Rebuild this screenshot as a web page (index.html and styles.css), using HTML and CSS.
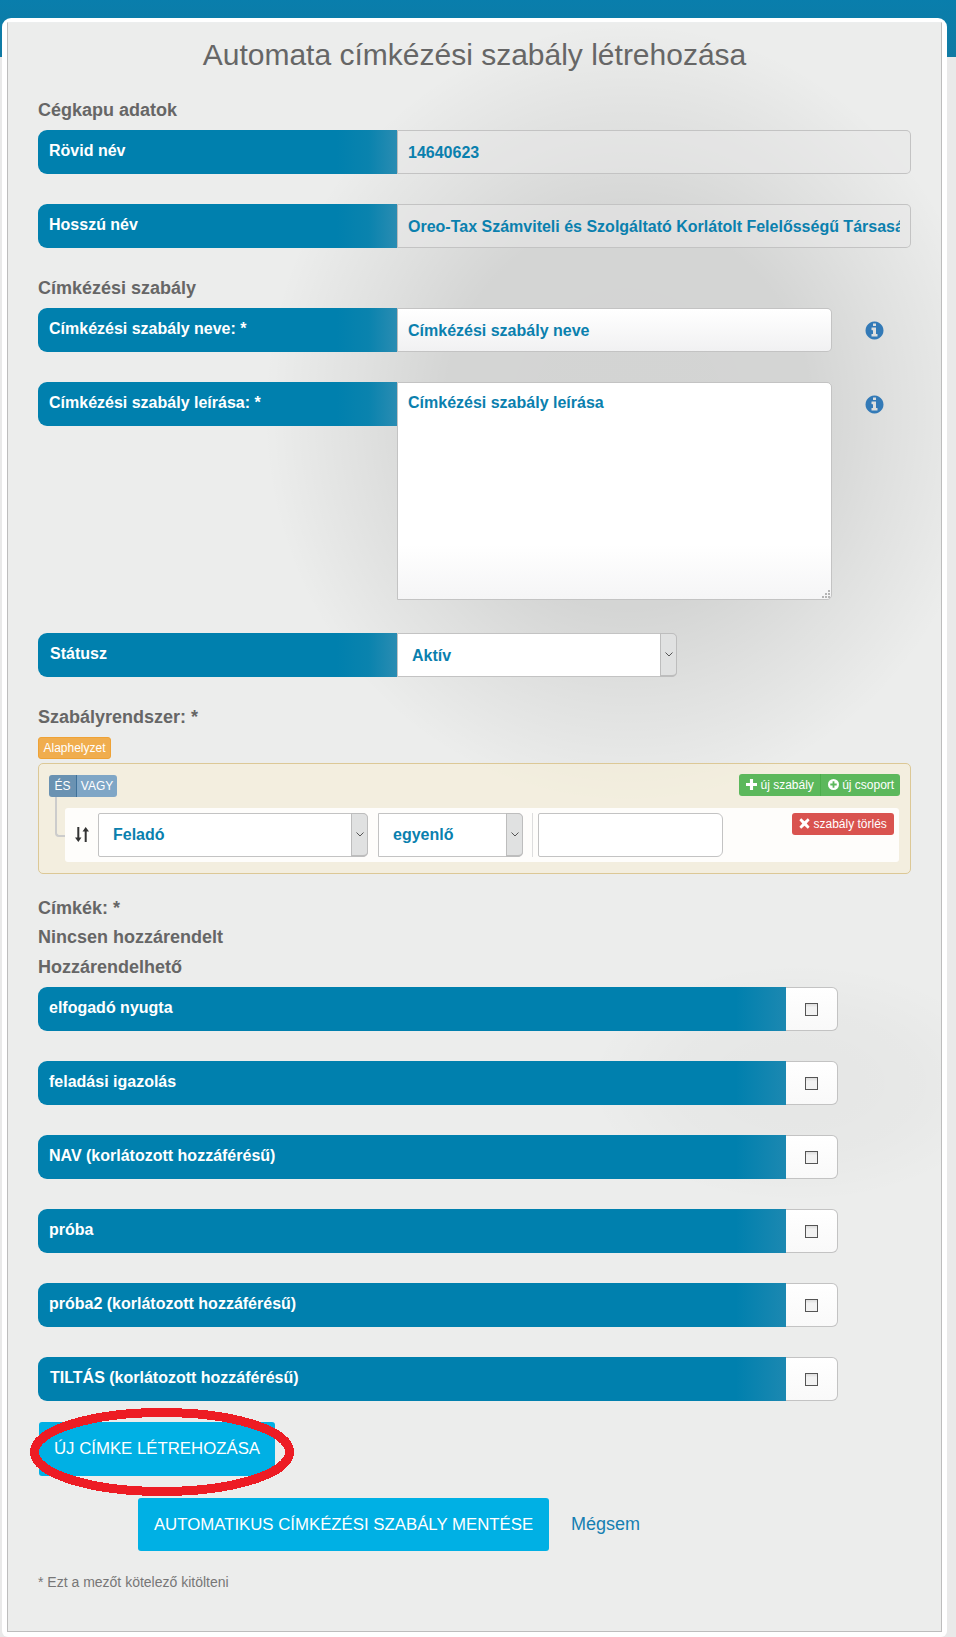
FILE: index.html
```html
<!DOCTYPE html>
<html lang="hu">
<head>
<meta charset="utf-8">
<title>Automata címkézési szabály létrehozása</title>
<link rel="stylesheet" href="styles.css">
</head>
<body>
<div class="topbar"></div>
<main class="card">
  <div class="inner">
    <h1 class="title">Automata címkézési szabály létrehozása</h1>

    <h2 class="section">Cégkapu adatok</h2>
    <div class="row">
      <label class="row-label">Rövid név</label>
      <input class="field field-disabled" readonly value="14640623">
    </div>
    <div class="row">
      <label class="row-label">Hosszú név</label>
      <input class="field field-disabled" readonly value="Oreo-Tax Számviteli és Szolgáltató Korlátolt Felelősségű Társaság">
    </div>

    <h2 class="section">Címkézési szabály</h2>
    <div class="row">
      <label class="row-label">Címkézési szabály neve: *</label>
      <input class="field field-edit" value="Címkézési szabály neve">
      <svg class="info" viewBox="0 0 1792 1792"><path d="M1152 1376v-160q0-14-9-23t-23-9h-96v-512q0-14-9-23t-23-9h-320q-14 0-23 9t-9 23v160q0 14 9 23t23 9h96v320h-96q-14 0-23 9t-9 23v160q0 14 9 23t23 9h448q14 0 23-9t9-23zm-128-896v-160q0-14-9-23t-23-9h-192q-14 0-23 9t-9 23v160q0 14 9 23t23 9h192q14 0 23-9t9-23zm640 416q0 209-103 385.5t-279.5 279.5-385.5 103-385.5-103-279.5-279.5-103-385.5 103-385.5 279.5-279.5 385.5-103 385.5 103 279.5 279.5 103 385.5z"/></svg>
    </div>
    <div class="row row-area">
      <label class="row-label">Címkézési szabály leírása: *</label>
      <div class="area-wrap">
        <textarea class="area">Címkézési szabály leírása</textarea>
        <svg class="grip" viewBox="0 0 8 8"><path d="M6 0h2v2H6zM3 3h2v2H3zM6 3h2v2H6zM0 6h2v2H0zM3 6h2v2H3zM6 6h2v2H6z"/></svg>
      </div>
      <svg class="info" viewBox="0 0 1792 1792"><path d="M1152 1376v-160q0-14-9-23t-23-9h-96v-512q0-14-9-23t-23-9h-320q-14 0-23 9t-9 23v160q0 14 9 23t23 9h96v320h-96q-14 0-23 9t-9 23v160q0 14 9 23t23 9h448q14 0 23-9t9-23zm-128-896v-160q0-14-9-23t-23-9h-192q-14 0-23 9t-9 23v160q0 14 9 23t23 9h192q14 0 23-9t9-23zm640 416q0 209-103 385.5t-279.5 279.5-385.5 103-385.5-103-279.5-279.5-103-385.5 103-385.5 279.5-279.5 385.5-103 385.5 103 279.5 279.5 103 385.5z"/></svg>
    </div>
    <div class="row">
      <label class="row-label row-label-shift">Státusz</label>
      <div class="select select-status">
        <span class="select-text">Aktív</span>
        <span class="select-arrow"><svg class="chevron" viewBox="0 0 8 5"><path d="M.5.5 4 4 7.500.5"/></svg></span>
      </div>
    </div>

    <h2 class="section section-tight">Szabályrendszer: *</h2>
    <button class="reset" type="button">Alaphelyzet</button>
    <section class="group">
      <div class="group-head">
        <div class="btn-pair">
          <button class="xs xs-and" type="button">ÉS</button><button class="xs xs-or" type="button">VAGY</button>
        </div>
        <div class="btn-pair btn-pair-add">
          <button class="xs xs-green" type="button">
            <svg class="gl" viewBox="0 0 12 12"><path class="gl-white" d="M4.300 0h3.400v4.300H12v3.400H7.700V12H4.300V7.700H0V4.300h4.300z"/></svg>
            új szabály</button><button class="xs xs-green xs-sep" type="button">
            <svg class="gl" viewBox="0 0 12 12"><circle class="gl-white" cx="6" cy="6" r="6"/><path class="gl-green" d="M5 2.500h2V5h2.500v2H7v2.500H5V7H2.500V5H5z"/></svg>
            új csoport</button>
        </div>
      </div>
      <div class="rule">
        <span class="connector"></span>
        <svg class="sort" viewBox="0 0 14 15"><path d="M2.300 0h2v10.500H6.500L3.300 15 0 10.500h2.300zM9.700 15h2V4.500H14L10.700 0 7.500 4.500h2.200z"/></svg>
        <div class="select select-field">
          <span class="select-text">Feladó</span>
          <span class="select-arrow"><svg class="chevron" viewBox="0 0 8 5"><path d="M.5.5 4 4 7.500.5"/></svg></span>
        </div>
        <div class="select select-op">
          <span class="select-text">egyenlő</span>
          <span class="select-arrow"><svg class="chevron" viewBox="0 0 8 5"><path d="M.5.5 4 4 7.500.5"/></svg></span>
        </div>
        <span class="rule-sep"></span>
        <input class="rule-input">
        <button class="xs xs-red" type="button">
          <svg class="gl" viewBox="0 0 12 12"><path class="gl-white" d="M2.400.4 6 3.600 9.600.4l2 2L8.400 6l3.200 3.600-2 2L6 8.400l-3.600 3.200-2-2L3.600 6 .4 2.400z"/></svg>
          szabály törlés</button>
      </div>
    </section>

    <h2 class="section section-labels">Címkék: *</h2>
    <h2 class="section section-stack">Nincsen hozzárendelt</h2>
    <h2 class="section section-stack section-last">Hozzárendelhető</h2>

    <div class="tag-row"><span class="tag-label">elfogadó nyugta</span><span class="tag-check"><input class="check" type="checkbox"></span></div>
    <div class="tag-row"><span class="tag-label">feladási igazolás</span><span class="tag-check"><input class="check" type="checkbox"></span></div>
    <div class="tag-row"><span class="tag-label">NAV (korlátozott hozzáférésű)</span><span class="tag-check"><input class="check" type="checkbox"></span></div>
    <div class="tag-row"><span class="tag-label">próba</span><span class="tag-check"><input class="check" type="checkbox"></span></div>
    <div class="tag-row"><span class="tag-label">próba2 (korlátozott hozzáférésű)</span><span class="tag-check"><input class="check" type="checkbox"></span></div>
    <div class="tag-row"><span class="tag-label tag-label-shift">TILTÁS (korlátozott hozzáférésű)</span><span class="tag-check"><input class="check" type="checkbox"></span></div>

    <div class="new-tag">
      <button class="cta cta-new" type="button">ÚJ CÍMKE LÉTREHOZÁSA</button>
      <svg class="mark" viewBox="0 0 264 90"><ellipse cx="132" cy="45" rx="127.500" ry="39.500"/></svg>
    </div>
    <div class="actions">
      <button class="cta cta-save" type="button">AUTOMATIKUS CÍMKÉZÉSI SZABÁLY MENTÉSE</button>
      <a class="cancel" href="#">Mégsem</a>
    </div>
    <p class="note">* Ezt a mezőt kötelező kitölteni</p>
  </div>
</main>
</body>
</html>
```
FILE: styles.css
```css
* { box-sizing: border-box; }
html, body { margin: 0; padding: 0; }
body {
  background: #e9e9e9;
  font-family: "Liberation Sans", Arial, sans-serif;
  height: 1637px;
  overflow: hidden;
}
.topbar {
  height: 57px;
  background: linear-gradient(#097eac, #107aa3);
}
.card {
  position: relative;
  margin: -39px 9px 0 2px;
  padding: 4px 5px 0;
  background: #fff;
  border-radius: 9px 9px 6px 6px;
  height: 1619px;
}
.inner {
  height: 1610px;
  border: 1px solid #bdbdbd;
  border-top-color: #eceeee;
  padding: 0 30px;
  background-color: #ecedec;
  background-image:
    radial-gradient(ellipse 210px 120px at 790px 1060px, rgba(0,0,0,.03) 0, rgba(0,0,0,.018) 60%, rgba(0,0,0,0) 100%),
    radial-gradient(ellipse 365px 390px at 620px 390px, rgba(0,0,0,.105) 0, rgba(0,0,0,.1) 50%, rgba(0,0,0,.055) 72%, rgba(0,0,0,.018) 90%, rgba(0,0,0,0) 100%);
  background-repeat: no-repeat;
}
.title {
  margin: 0;
  padding-top: 15px;
  height: 77px;
  font-size: 30px;
  line-height: 34px;
  font-weight: 400;
  color: #666;
  text-align: center;
}
.section {
  margin: 0 0 10px;
  font-size: 18px;
  line-height: 20px;
  font-weight: 700;
  color: #666;
}
.section-tight { margin-bottom: 10px; }
.section-labels { margin: 24px 0 9px; }
.section-stack { margin-bottom: 10px; }
.section-last { margin-bottom: 10px; }

.row {
  display: flex;
  align-items: flex-start;
  margin-bottom: 30px;
}
.row-area { margin-bottom: 33px; }
.row-label {
  flex: none;
  width: 359px;
  height: 44px;
  padding: 10px 0 0 11px;
  font-size: 16px;
  line-height: 22px;
  font-weight: 700;
  color: #fff;
  border-radius: 9px 0 0 9px;
  background: linear-gradient(90deg, #0080ae calc(100% - 60px), #0a83ae calc(100% - 28px), #2a8cb2);
}
.row-label-shift { padding-left: 12px; }
.field {
  display: block;
  height: 44px;
  padding: 1px 10px 0;
  border: 1px solid #c3c3c3;
  border-left-color: #bbb;
  border-radius: 0 5px 5px 0;
  font: 700 16px/22px "Liberation Sans", Arial, sans-serif;
  color: #0a80ae;
  outline: 0;
}
.field-disabled {
  flex: 1;
  min-width: 0;
  background: rgba(232,232,232,.55);
}
.field-edit {
  width: 435px;
  background: linear-gradient(#fff, #f1f1f2);
}
.info {
  flex: none;
  width: 21px;
  height: 21px;
  margin: 12px 0 0 32px;
  fill: #337ab7;
}
.area-wrap {
  position: relative;
  flex: none;
  width: 435px;
  height: 218px;
}
.area {
  display: block;
  width: 100%;
  height: 100%;
  padding: 9px 10px;
  border: 1px solid #c3c3c3;
  border-radius: 0 5px 5px 0;
  background: linear-gradient(#fff 75%, #f5f5f6);
  font: 700 16px/22px "Liberation Sans", Arial, sans-serif;
  color: #0a80ae;
  outline: 0;
  resize: none;
}
.grip {
  position: absolute;
  right: 2px;
  bottom: 2px;
  width: 8px;
  height: 8px;
  fill: #b5b5b5;
}

.select {
  display: flex;
  height: 44px;
  border: 1px solid #c3c3c3;
  border-radius: 0 5px 5px 0;
  background: #fff;
  font-size: 16px;
  font-weight: 700;
  color: #0a80ae;
}
.select-status { width: 280px; }
.select-status .select-text { line-height: 43px; }
.select-text {
  flex: 1;
  padding-left: 14px;
  line-height: 42px;
}
.select-arrow {
  flex: none;
  display: flex;
  align-items: center;
  justify-content: center;
  width: 17px;
  margin: -1px -1px -1px 0;
  background: #e0e1e1;
  border: 1px solid #bdbdbd;
  border-bottom-width: 2px;
  border-radius: 0 5px 5px 0;
}
.chevron {
  width: 8px;
  height: 5px;
  fill: none;
  stroke: #555;
  stroke-width: 1;
}

.reset {
  display: block;
  width: 73px;
  height: 22px;
  margin: 0 0 4px;
  padding: 0;
  border: 1px solid #eea236;
  border-radius: 3px;
  background: #f0ad4e;
  color: #fff;
  font: 12px/20px "Liberation Sans", Arial, sans-serif;
}
.group {
  height: 111px;
  padding: 11px 10px 0;
  border: 1px solid #dcc896;
  border-radius: 5px;
  background: rgba(250,240,210,.5);
}
.group-head {
  display: flex;
  justify-content: space-between;
  margin-bottom: 11px;
}
.btn-pair { display: flex; }
.btn-pair-add { margin-top: -1px; }
.xs {
  height: 22px;
  padding: 0 5px;
  border: 0;
  color: #fff;
  font: 12px/22px "Liberation Sans", Arial, sans-serif;
  white-space: nowrap;
}
.xs-and {
  width: 28px;
  padding: 0;
  background: #6a92b2;
  border-right: 1px solid #3f719a;
  border-radius: 3px 0 0 3px;
}
.xs-or {
  width: 40px;
  padding: 0;
  background: #7fa6c6;
  border-radius: 0 3px 3px 0;
}
.xs-green {
  width: 81px;
  padding: 0 0 0 1px;
  background: #5cb85c;
  border-radius: 3px 0 0 3px;
}
.xs-sep {
  width: 80px;
  border-left: 1px solid #4cae4c;
  border-radius: 0 3px 3px 0;
}
.xs-red {
  flex: none;
  width: 102px;
  margin: 0 0 0 69px;
  padding: 0;
  background: #d9534f;
  border-radius: 3px;
  align-self: flex-start;
}
.gl {
  display: inline-block;
  width: 11px;
  height: 11px;
  vertical-align: -1px;
}
.gl-white { fill: #fff; }
.gl-green { fill: #5cb85c; }

.rule {
  position: relative;
  display: flex;
  align-items: flex-start;
  width: 834px;
  height: 54px;
  margin-left: 16px;
  padding: 5px 0 0 10px;
  border-radius: 3px;
  background: rgba(255,255,255,.88);
}
.connector {
  position: absolute;
  left: -10px;
  top: -11px;
  width: 10px;
  height: 40px;
  border: 2px solid #ccc;
  border-top: 0;
  border-right: 0;
  border-radius: 0 0 0 4px;
}
.sort {
  flex: none;
  width: 14px;
  height: 15px;
  margin: 14px 9px 0 0;
  fill: #333;
}
.select-field {
  width: 270px;
  margin-right: 10px;
  border-radius: 2px 5px 5px 2px;
}
.select-op { width: 145px; }
.rule-sep {
  flex: none;
  width: 1px;
  height: 44px;
  margin: 0 5px 0 9px;
  background: #ddd;
}
.rule-input {
  flex: none;
  width: 185px;
  height: 44px;
  border: 1px solid #c3c3c3;
  border-radius: 2px 6px 6px 2px;
  background: #fff;
  outline: 0;
}

.tag-row {
  display: flex;
  height: 44px;
  margin-bottom: 30px;
}
.tag-label {
  width: 748px;
  padding: 10px 0 0 11px;
  font-size: 16px;
  line-height: 22px;
  font-weight: 700;
  color: #fff;
  border-radius: 9px 0 0 9px;
  background: linear-gradient(90deg, #0080ae calc(100% - 50px), #1c88b1);
}
.tag-label-shift { padding-left: 12px; }
.tag-check {
  display: flex;
  align-items: center;
  justify-content: center;
  width: 52px;
  border: 1px solid #c3c3c3;
  border-left: 0;
  border-radius: 0 6px 6px 0;
  background: linear-gradient(#fff, #f9f9f9);
}
.check {
  appearance: none;
  width: 13px;
  height: 13px;
  margin: 0;
  border: 1px solid #555;
  background: linear-gradient(#dcdcdc, #f2f2f2 30%);
}

.new-tag {
  position: relative;
  margin: -9px 0 22px 1px;
  width: 236px;
  height: 54px;
}
.cta {
  border: 0;
  border-radius: 3px;
  background: #00b0e4;
  color: #fff;
  font: 16.8px/20px "Liberation Sans", Arial, sans-serif;
  padding: 0;
}
.cta-new { width: 236px; height: 54px; }
.mark {
  position: absolute;
  left: -9px;
  top: -15px;
  width: 264px;
  height: 90px;
  fill: none;
  stroke: #ed1c24;
  stroke-width: 9;
  shape-rendering: crispEdges;
  pointer-events: none;
}
.actions {
  display: flex;
  align-items: center;
  height: 53px;
  margin-left: 100px;
}
.cta-save { width: 411px; height: 53px; }
.cancel {
  margin-left: 22px;
  font-size: 18px;
  color: #167fb2;
  text-decoration: none;
}
.note {
  margin: 21px 0 0;
  font-size: 14px;
  line-height: 20px;
  color: #777;
}
```
